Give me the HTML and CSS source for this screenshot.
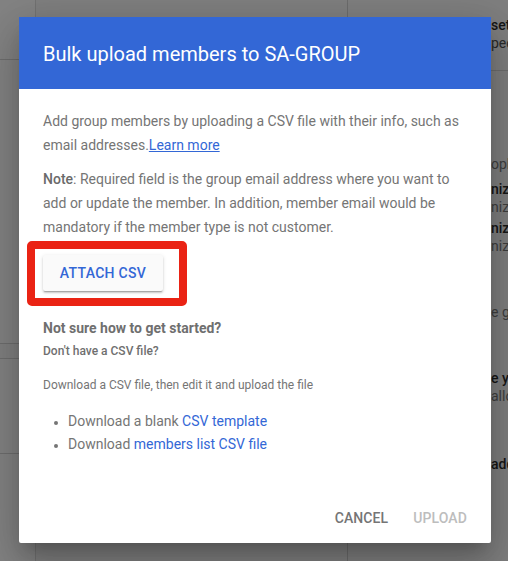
FILE: index.html
```html
<!DOCTYPE html>
<html lang="en">
<head>
<meta charset="utf-8">
<title>Bulk upload members</title>
<link rel="stylesheet" href="styles.css">
</head>
<body>
<div class="page">
  <aside class="side">
    <div class="side-top"></div>
    <div class="side-mid"></div>
    <div class="side-band"></div>
    <div class="side-low"></div>
  </aside>
  <main class="main"></main>
  <section class="panel">
    <div class="panel-head">
      <div class="pt bold">settings</div>
      <div class="pt">people</div>
    </div>
    <div class="panel-body">
      <div class="pt light r1">ople</div>
      <div class="pt bold r2">nization</div>
      <div class="pt light">nization</div>
      <div class="pt bold r3">nization</div>
      <div class="pt light">nization</div>
      <div class="pt light r4">e groups</div>
      <div class="pt bold r5">e your</div>
      <div class="pt light">allow</div>
      <div class="pt bold r6">address</div>
    </div>
  </section>
</div>

<div class="dialog" role="dialog">
  <header class="dialog-head">
    <h1 class="dialog-title">Bulk upload members to SA-GROUP</h1>
  </header>
  <div class="dialog-body">
    <p class="para">Add group members by uploading a CSV file with their info, such as email addresses.<a class="link underline" href="#">Learn more</a></p>
    <p class="para"><b class="strong">Note</b>: Required field is the group email address where you want to add or update the member. In addition, member email would be mandatory if the member type is not customer.</p>
    <div class="highlight">
      <button class="attach" type="button">ATTACH CSV</button>
    </div>
    <h2 class="help-title">Not sure how to get started?</h2>
    <h3 class="help-sub">Don't have a CSV file?</h3>
    <p class="help-text">Download a CSV file, then edit it and upload the file</p>
    <ul class="dl-list">
      <li>Download a blank <a class="link" href="#">CSV template</a></li>
      <li>Download <a class="link" href="#">members list CSV file</a></li>
    </ul>
  </div>
  <footer class="actions">
    <button class="act" type="button">CANCEL</button>
    <button class="act disabled" type="button">UPLOAD</button>
  </footer>
</div>
</body>
</html>
```

FILE: styles.css
```css
* { box-sizing: border-box; }

html, body {
  margin: 0;
  padding: 0;
}

body {
  width: 508px;
  height: 561px;
  overflow: hidden;
  background: #7f7f7f;
  font-family: Roboto, "Noto Sans", sans-serif;
  position: relative;
}

/* ---------- underlying page (dimmed) ---------- */
.page {
  display: flex;
  height: 561px;
}

.side {
  width: 36px;
  flex: none;
  background: #838383;
  border-right: 1px solid #727272;
  display: flex;
  flex-direction: column;
}
.side-top { height: 60px; border-bottom: 1px solid #6e6e6e; }
.side-mid { height: 284px; border-bottom: 1px solid #6e6e6e; }
.side-band { height: 15px; border-bottom: 1px solid #6e6e6e; background: #808080; }
.side-low { height: 95px; border-bottom: 1px solid #6e6e6e; }

.main {
  width: 312px;
  flex: none;
  border-right: 1px solid #6c6c6c;
}

.panel {
  flex: 1;
  overflow: hidden;
  white-space: nowrap;
}
.panel-head {
  height: 71px;
  padding: 16px 0 0 143px;
  border-bottom: 1px solid #6e6e6e;
}
.panel-body {
  padding-left: 143px;
}
.pt {
  font-size: 14px;
  line-height: 18px;
  color: #2a2a2a;
}
.pt.bold { font-weight: 500; color: #161616; }
.pt.light { color: #3e3e3e; }
.r1 { margin-top: 84px; }
.r2 { margin-top: 7px; }
.r3 { margin-top: 3px; }
.r4 { margin-top: 48px; }
.r5 { margin-top: 48px; }
.r6 { margin-top: 50px; }

/* ---------- dialog ---------- */
.dialog {
  position: absolute;
  left: 19px;
  top: 17px;
  width: 472px;
  height: 526px;
  background: #fff;
  border-radius: 2px;
  box-shadow: 0 24px 38px 3px rgba(0,0,0,.14), 0 9px 46px 8px rgba(0,0,0,.12), 0 11px 15px -7px rgba(0,0,0,.2);
  display: flex;
  flex-direction: column;
}

.dialog-head {
  height: 72px;
  background: #3367d6;
  padding: 0 24px;
  display: flex;
  align-items: center;
  flex: none;
}
.dialog-title {
  margin: 0;
  color: #fff;
  font-size: 20px;
  font-weight: 400;
  line-height: 28px;
  padding-top: 1px;
}

.dialog-body {
  padding: 20px 24px 0;
  flex: 1;
  color: #757575;
}

.para {
  margin: 0 0 10px;
  font-size: 14px;
  line-height: 24px;
}
.strong { font-weight: 500; color: #6a6a6a; }

.link {
  color: #3367d6;
  text-decoration: none;
}
.link.underline { text-decoration: underline; }

.highlight {
  margin: -8px 0 0 -16px;
  width: 160px;
  height: 65px;
  border: 8px solid #ea2314;
  border-radius: 5px;
  padding: 6px 0 0 8px;
}

.attach {
  display: block;
  width: 120px;
  height: 36px;
  border: none;
  border-radius: 2px;
  background: #fafafa;
  color: #3367d6;
  font-family: Roboto, "Noto Sans", sans-serif;
  font-size: 14px;
  font-weight: 500;
  letter-spacing: .3px;
  padding: 0;
  box-shadow: 0 2px 2px 0 rgba(0,0,0,.14), 0 1px 4px 0 rgba(0,0,0,.12), 0 2px 1px -1px rgba(0,0,0,.2);
}

.help-title {
  margin: 12px 0 0;
  font-size: 14px;
  font-weight: 700;
  line-height: 20px;
  color: #6f6f6f;
}
.help-sub {
  margin: 3px 0 0;
  font-size: 12px;
  font-weight: 500;
  line-height: 20px;
  color: #6f6f6f;
}
.help-text {
  margin: 14px 0 0;
  font-size: 12px;
  line-height: 20px;
}

.dl-list {
  margin: 15px 0 0;
  padding-left: 25px;
  font-size: 14px;
  line-height: 23px;
}
.dl-list li::marker { font-size: 12px; }

.actions {
  flex: none;
  display: flex;
  justify-content: flex-end;
  gap: 9px;
  padding: 0 16px 7px;
}
.act {
  height: 36px;
  min-width: 64px;
  padding: 0 8px;
  border: none;
  background: transparent;
  font-family: Roboto, "Noto Sans", sans-serif;
  font-size: 14px;
  font-weight: 500;
  color: #757575;
  letter-spacing: .1px;
}
.act.disabled { color: #bdbdbd; }
```
